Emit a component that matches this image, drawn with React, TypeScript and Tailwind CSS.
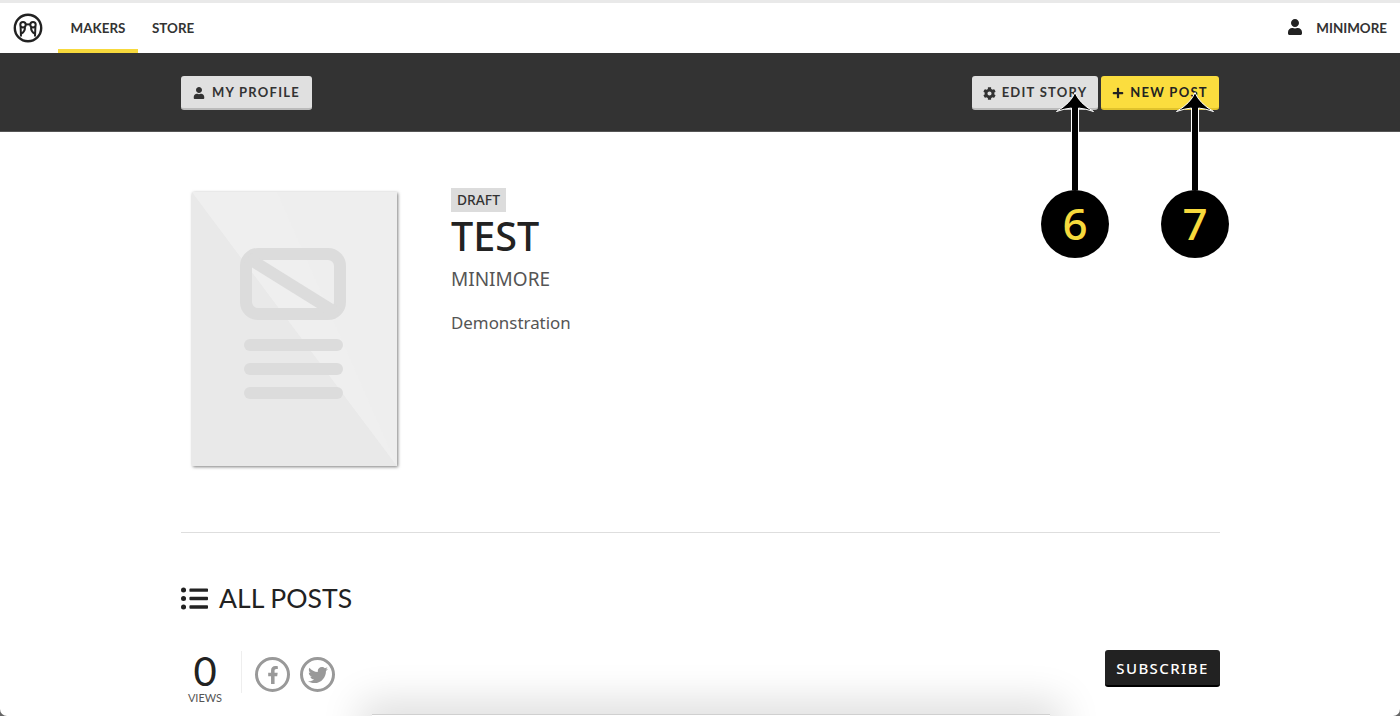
import { FaCog, FaFacebookF, FaListUl, FaPlus, FaTwitter, FaUser } from "react-icons/fa";

function Logo() {
  return (
    <svg width="30" height="30" viewBox="0 0 30 30" fill="none" stroke="#222" strokeWidth="2.4">
      <circle cx="15" cy="15" r="13.2" />
      <circle cx="10" cy="11.8" r="2.7" strokeWidth="2" />
      <circle cx="20" cy="11.8" r="2.7" strokeWidth="2" />
      <path d="M12.7 11.4h4.6" strokeWidth="2" />
      <path d="M7.6 13.5 8 23.5M22.4 13.5 22 23.5M12 14.2c0 2.6-1 5-3.6 6.4M18 14.2c0 2.6 1 5 3.6 6.4" strokeWidth="2" />
    </svg>
  );
}

function Placeholder() {
  return (
    <svg width="205" height="274" viewBox="0 0 205 274" className="block">
      <rect width="205" height="274" fill="#eeeeee" />
      <polygon points="0,0 205,274 0,274" fill="#e9e9e9" />
      <polygon points="0,0 85,0 205,274" fill="#efefef" />
      <rect x="54" y="62" width="94" height="60" rx="12" fill="none" stroke="#dcdcdc" strokeWidth="12" />
      <path d="M56 66 146 122" stroke="#dcdcdc" strokeWidth="12" />
      <rect x="52" y="147" width="99" height="12" rx="6" fill="#dcdcdc" />
      <rect x="52" y="171" width="99" height="12" rx="6" fill="#dcdcdc" />
      <rect x="52" y="195" width="99" height="12" rx="6" fill="#dcdcdc" />
    </svg>
  );
}

// numbered callout, sits over the page
function Callout({ number, className }: { number: string; className: string }) {
  return (
    <div className={`absolute top-[91px] w-[68px] h-[167px] ${className}`}>
      <svg width="68" height="100" viewBox="0 0 68 100" className="absolute top-0 left-0">
        <path
          d="M34 1.5 Q38 12 52.5 20.5 Q44 17.5 37.5 17 L37.5 100 L30.5 100 L30.5 17 Q24 17.5 15.5 20.5 Q30 12 34 1.5 Z"
          fill="#000"
          stroke="#fff"
          strokeWidth="1"
        />
      </svg>
      <div className="absolute bottom-0 left-0 w-[68px] h-[68px] rounded-full bg-black flex items-center justify-center pb-[3px] text-[#f7d93c] text-[44px] font-['Noto_Sans',sans-serif] font-medium leading-none">
        {number}
      </div>
    </div>
  );
}

export default function App() {
  return (
    <div className="w-[1400px] h-[716px] bg-[#666]">
      <div className="relative w-[1400px] h-[716px] overflow-hidden rounded-b-[7px] bg-white font-[Lato,sans-serif] text-[#222]">
        <div className="h-[3px] bg-[#e9e9e9]" />

        <nav className="h-[50px] flex items-center justify-between">
          <div className="flex items-stretch h-full">
            <div className="w-[58px] flex items-center pl-[13px]">
              <Logo />
            </div>
            <a className="w-[80px] flex items-center justify-center text-[13.4px] font-bold border-b-4 border-[#f7d93c] pt-[4px] text-[#333]">
              MAKERS
            </a>
            <a className="ml-[14px] flex items-center text-[13.4px] font-bold text-[#333]">STORE</a>
          </div>
          <div className="flex items-center pr-[13px] text-[#333]">
            <FaUser className="text-[16px] text-[#222] mr-[12px] mb-[1px]" />
            <span className="text-[13.4px] font-bold pl-[1px]">MINIMORE</span>
          </div>
        </nav>

        <div className="h-[79px] bg-[#333333] pl-[181px] pr-[181px] flex items-start justify-between pt-[23px] border-b border-[#555]">
          <button className="h-[34px] w-[131px] pt-[2px] rounded-[3px] bg-[#e0e0e0] border-b-2 border-[#bbb] flex items-center justify-center gap-[7px] text-[13px] font-bold tracking-[1.25px] text-[#333]">
            <FaUser className="text-[12px]" />
            MY PROFILE
          </button>
          <div className="flex gap-[3px]">
            <button className="h-[34px] w-[126px] pt-[2px] rounded-[3px] bg-[#e0e0e0] border-b-2 border-[#bbb] flex items-center justify-center gap-[6px] text-[13px] font-bold tracking-[1.25px] text-[#333]">
              <FaCog className="text-[13px]" />
              EDIT STORY
            </button>
            <button className="h-[34px] w-[118px] pt-[2px] rounded-[3px] bg-[#fbdd3e] border-b-2 border-[#e0c22c] flex items-center justify-center gap-[6px] text-[13px] font-bold tracking-[1.25px] text-[#222]">
              <FaPlus className="text-[12px]" />
              NEW POST
            </button>
          </div>
        </div>

        <main className="pl-[181px] pr-[180px]">
          <section className="flex pt-[56px] h-[401px] border-b border-[#dedede]">
            <div className="ml-[11px] mt-[4px] h-[274px] w-[205px] shadow-[1px_1px_3px_rgba(0,0,0,0.5)]">
              <Placeholder />
            </div>
            <div className="ml-[54px] font-['Noto_Sans',sans-serif]">
              <span className="block w-fit h-[24px] px-[6px] bg-[#dcdcdc] text-[13.8px] font-medium leading-[24px] text-[#333]">
                DRAFT
              </span>
              <h1 className="text-[39.5px] font-medium leading-[48px] text-[#222]">TEST</h1>
              <p className="mt-[6px] text-[19px] leading-[26px] text-[#555]">MINIMORE</p>
              <p className="mt-[19px] text-[16.9px] leading-[24px] text-[#555]">Demonstration</p>
            </div>
          </section>

          <h2 className="mt-[47px] flex items-center gap-[11px] text-[26.6px] leading-[36px] text-[#222]">
            <FaListUl className="text-[27px]" />
            ALL POSTS
          </h2>

          <div className="mt-[35px] flex items-start justify-between">
            <div className="flex items-start">
              <div className="w-[48px] flex flex-col items-center">
                <span className="text-[40px] leading-[40px] text-[#222]">0</span>
                <span className="text-[11px] leading-[14px] text-[#555]">VIEWS</span>
              </div>
              <div className="ml-[12px] w-px h-[42px] bg-[#eee]" />
              <div className="ml-[13px] mt-[6px] flex gap-[10px] text-[#999]">
                <div className="w-[35px] h-[35px] rounded-full border-[3px] border-[#999] flex items-center justify-center">
                  <FaFacebookF className="text-[18px]" />
                </div>
                <div className="w-[35px] h-[35px] rounded-full border-[3px] border-[#999] flex items-center justify-center">
                  <FaTwitter className="text-[20px]" />
                </div>
              </div>
            </div>
            <button className="mt-[-1px] h-[37px] w-[115px] pt-[2px] rounded-[3px] bg-[#222] border-b-2 border-[#000] font-['Noto_Sans',sans-serif] text-white text-[15px] font-medium tracking-[1.4px]">
              SUBSCRIBE
            </button>
          </div>
        </main>

        <Callout number="6" className="left-[1041px]" />
        <Callout number="7" className="left-[1161px]" />

        {/* shadow of a panel just below the fold */}
        <div className="absolute left-[372px] top-[714px] w-[678px] h-[20px] bg-white border-t border-[#d0d0d0] shadow-[0_0_40px_12px_rgba(0,0,0,0.14)]" />
      </div>
    </div>
  );
}
